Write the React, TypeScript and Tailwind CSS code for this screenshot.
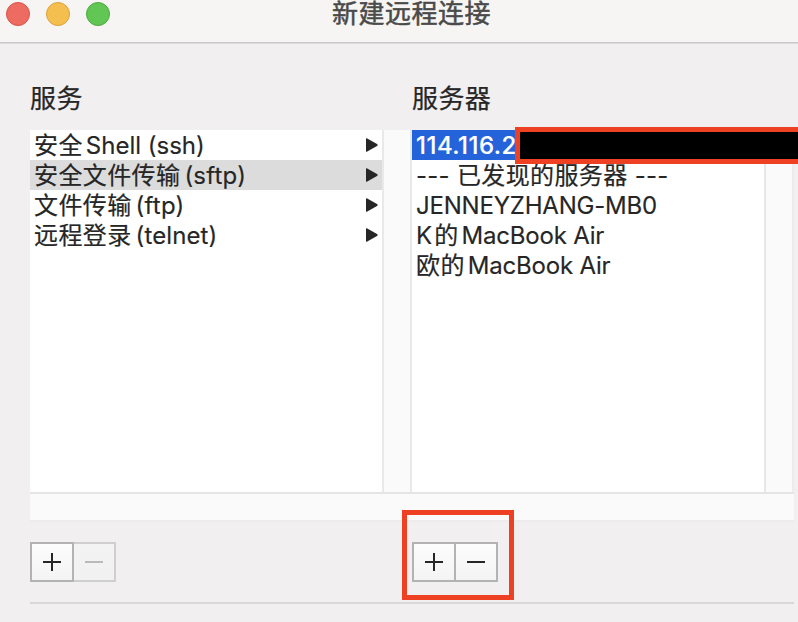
import type { ReactNode } from "react";
import { clsx } from "clsx";

function Cjk({ children }: { children: ReactNode }) {
  return <span className="text-[24px] tracking-[0.4px] [-webkit-text-stroke:0.2px_currentColor]">{children}</span>;
}

function Latin({ className, children }: { className?: string; children: ReactNode }) {
  return <span className={clsx("text-[24px] [-webkit-text-stroke:0.15px_currentColor]", className)}>{children}</span>;
}

function Row({ className, arrow, children }: { className?: string; arrow?: boolean; children: ReactNode }) {
  return (
    <li className={clsx("flex h-[30px] items-center justify-between whitespace-pre pl-1 pr-1 leading-[32px]", className)}>
      <div className="flex h-[30px] items-baseline">{children}</div>
      {arrow && (
        <svg width="13" height="14" viewBox="0 0 13 14" className="shrink-0 fill-[#262626]">
          <path d="M1 .7Q1 0 1.8.2L12 6.1Q13.4 7 12 7.9L1.8 13.8Q1 14 1 13.3Z" />
        </svg>
      )}
    </li>
  );
}

function Heading({ children }: { children: ReactNode }) {
  return <h2 className="text-[26px] leading-[37px] tracking-[0.4px] [-webkit-text-stroke:0.25px_currentColor]">{children}</h2>;
}

function Plus() {
  return (
    <svg width="18" height="18" viewBox="0 0 18 18" fill="none" stroke="#262626" strokeWidth="2">
      <path d="M0 9H18M9 0V18" />
    </svg>
  );
}

function Minus({ disabled }: { disabled?: boolean }) {
  return (
    <svg width="18" height="18" viewBox="0 0 18 18" fill="none" stroke={disabled ? "#bbbaba" : "#262626"} strokeWidth="2">
      <path d="M0 9H18" />
    </svg>
  );
}

const button = "flex h-10 items-center justify-center border-2 bg-linear-to-b";

export default function App() {
  return (
    <div className="relative h-[622px] w-[798px] overflow-hidden bg-[#f1eff0] font-['Inter','Noto_Sans_CJK_SC',sans-serif] text-[#262626]">
      <header className="flex h-[43px] border-b border-[#c9c7c7] bg-[#f6f5f3]">
        <div className="flex gap-4 pl-1.5 pt-0.5">
          <span className="size-6 rounded-full border border-[#d9534b] bg-[#ed6b60]" />
          <span className="size-6 rounded-full border border-[#dba23e] bg-[#f5bf4f]" />
          <span className="size-6 rounded-full border border-[#4dab3f] bg-[#62c655]" />
        </div>
        <h1 className="ml-[222px] text-[26px] leading-[28px] tracking-[0.5px] text-[#4a4a4a] [-webkit-text-stroke:0.5px_currentColor]">新建远程连接</h1>
      </header>

      <main className="w-[798px] border-t border-[#dddbdc] pl-[30px] pr-1 pt-9">
        <div className="flex h-[50px]">
          <div className="w-[382px]"><Heading>服务</Heading></div>
          <Heading>服务器</Heading>
        </div>

        <div className="flex h-[362px]">
          <ul className="w-[352px] bg-white">
            <Row arrow><Cjk>安全</Cjk><Latin className="ml-[3px]">Shell (ssh)</Latin></Row>
            <Row arrow className="bg-[#dcdcdc]"><Cjk>安全文件传输</Cjk><Latin className="ml-[4px] tracking-[0.2px]">(sftp)</Latin></Row>
            <Row arrow><Cjk>文件传输</Cjk><Latin className="ml-[4px] tracking-[0.2px]">(ftp)</Latin></Row>
            <Row arrow><Cjk>远程登录</Cjk><Latin className="ml-[4px] tracking-[0.1px]">(telnet)</Latin></Row>
          </ul>
          <div className="w-[30px] border-x-2 border-[#e9e9e9] bg-[#fafafa]" />
          <ul className="w-[352px] bg-white">
            <Row className="bg-[#2463da] text-white"><Latin className="font-medium tracking-[0.5px]">114.116.2</Latin></Row>
            <Row><Latin className="tracking-[0.25px]">--- </Latin><Cjk>已发现的服务器</Cjk><Latin className="tracking-[0.25px]"> ---</Latin></Row>
            <Row><Latin className="tracking-[-0.2px]">JENNEYZHANG-MB0</Latin></Row>
            <Row><Latin>K</Latin><span className="ml-[2px]"><Cjk>的</Cjk></span><Latin className="ml-[3px] tracking-[-0.2px]">MacBook Air</Latin></Row>
            <Row><Cjk>欧的</Cjk><Latin className="ml-[3px] tracking-[-0.2px]">MacBook Air</Latin></Row>
          </ul>
          <div className="w-[30px] border-x-2 border-l-[#e7e7e7] border-r-[#ececec] bg-[#fafafa]" />
        </div>
        <div className="h-[30px] border-y-2 border-b-[#ececec] border-t-[#e5e5e5] bg-[#fafafa]" />

        <div className="flex h-[80px] pt-5">
          <div className="flex w-[382px]">
            <button className={clsx(button, "w-11 border-[#b3b3b3] from-[#fcfcfc] to-[#f4f4f4]")}><Plus /></button>
            <button className={clsx(button, "w-[42px] border-l-0 border-[#cfcfcf] from-[#f3f3f3] to-[#f1f1f1]")}><Minus disabled /></button>
          </div>
          <button className={clsx(button, "w-11 border-[#b3b3b3] from-[#fcfcfc] to-[#f4f4f4]")}><Plus /></button>
          <button className={clsx(button, "w-[42px] border-l-0 border-[#b3b3b3] from-[#fcfcfc] to-[#f4f4f4]")}><Minus /></button>
        </div>
        <hr className="border-t-2 border-[#d9d7d8]" />
      </main>

      <div className="absolute left-[515px] top-[127px] h-[37px] w-[290px] border-[5px] border-[#ee4023] bg-black" />
      <div className="absolute left-[402px] top-[510px] h-[90px] w-[112px] border-[5px] border-[#ee4023]" />
    </div>
  );
}
